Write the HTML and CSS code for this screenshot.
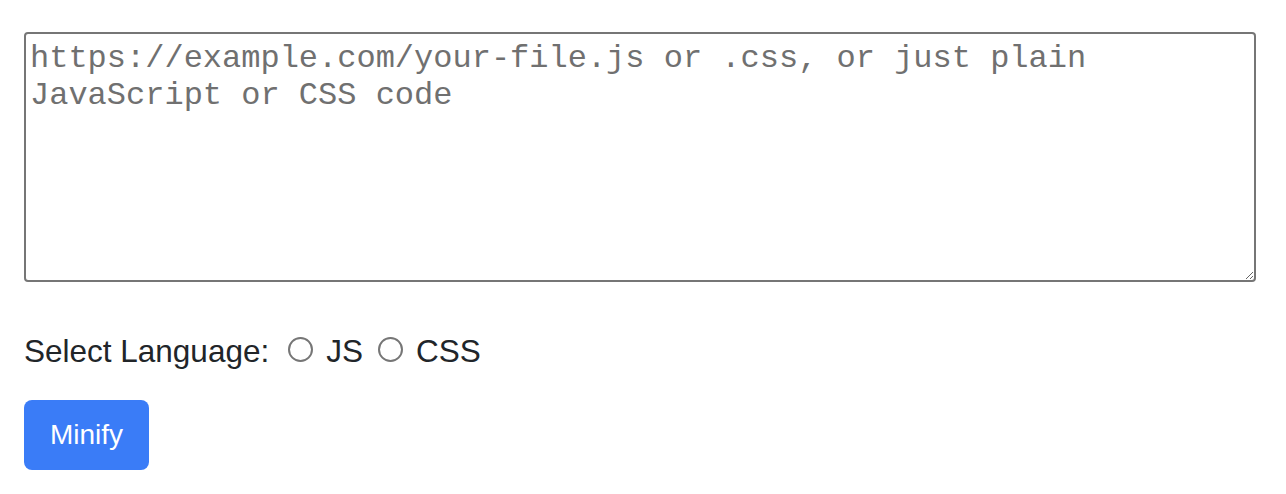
FILE: index.html
```html
<!DOCTYPE html>
<html lang="en">
<head>
<meta charset="utf-8">
<title>Minify</title>
<link rel="stylesheet" href="styles.css">
</head>
<body>
<main class="page">
  <textarea class="source" placeholder="https://example.com/your-file.js or .css, or just plain JavaScript or CSS code"></textarea>
  <div class="lang-row">
    <span class="lang-label">Select Language:</span>
    <label class="opt opt-js"><input type="radio" name="lang" class="radio"><span>JS</span></label>
    <label class="opt opt-css"><input type="radio" name="lang" class="radio"><span>CSS</span></label>
  </div>
  <button class="btn" type="button">Minify</button>
</main>
</body>
</html>
```

FILE: styles.css
```css
html, body {
  margin: 0;
  padding: 0;
  background: #ffffff;
}

.page {
  padding: 32px 30px 0 24px;
  font-family: "Liberation Sans", Arial, sans-serif;
  color: #212529;
  display: flex;
  flex-direction: column;
  align-items: flex-start;
}

.source {
  box-sizing: border-box;
  width: 1232px;
  height: 250px;
  margin: 0;
  padding: 6px 4px 4px 4px;
  border: 2px solid #767676;
  border-radius: 4px;
  font-family: "Liberation Mono", "Courier New", monospace;
  font-size: 32px;
  line-height: normal;
  color: #212529;
  background: #fff;
  resize: vertical;
  outline: none;
}

.source::placeholder {
  color: #707070;
  opacity: 1;
}

.lang-row {
  margin-top: 45px;
  display: flex;
  align-items: center;
  font-size: 31.5px;
  line-height: 48px;
  height: 48px;
}

.lang-label {
  margin-right: 19px;
}

.opt {
  display: flex;
  align-items: center;
}

.opt-js {
  margin-right: 15px;
}

.radio {
  appearance: none;
  -webkit-appearance: none;
  box-sizing: border-box;
  width: 25px;
  height: 25px;
  margin: 0 13px 0 0;
  border: 2px solid #767676;
  border-radius: 50%;
  background: #fff;
  position: relative;
  top: -2px;
}

.btn {
  margin-top: 25px;
  padding: 12px 26px;
  border: 0;
  border-radius: 8px;
  background: #3a7cf7;
  color: #ffffff;
  font-family: "Liberation Sans", Arial, sans-serif;
  font-size: 28px;
  line-height: 46px;
  cursor: pointer;
}
```
